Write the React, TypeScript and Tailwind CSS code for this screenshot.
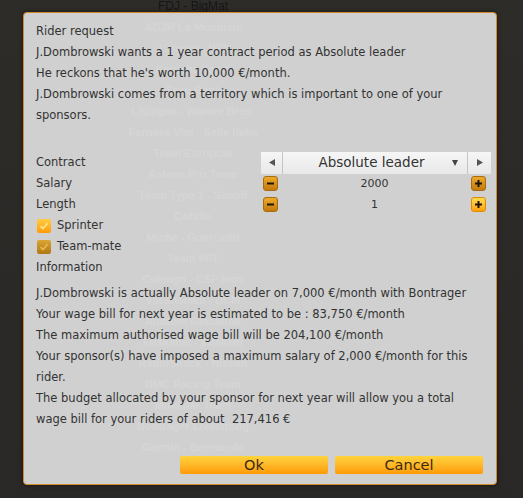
import React from 'react';

const teams = [
  'FDJ - BigMat',
  'AG2R La Mondiale',
  'Lampre - ISD',
  'Katusha Team',
  'Saxo Bank',
  'Liquigas - Warner Bros.',
  'Farnese Vini - Selle Italia',
  'Team Europcar',
  'Astana Pro Team',
  'Team Type 1 - Sanofi',
  'Cofidis',
  'Miche - Guerciotti',
  'Team WIT',
  'Colnago - CSF Inox',
  'Vacansoleil - DCM',
  'Androni Giocattoli',
  'Euskaltel - Euskadi',
  'RadioShack - Nissan',
  'BMC Racing Team',
  'Movistar Team',
  'Bontrager Livestrong',
  'Garmin - Barracuda',
];

const StepButton = ({ sign, bright }: { sign: '-' | '+'; bright?: boolean }) => (
  <div
    className={`w-[15px] h-[15px] rounded-[3px] flex items-center justify-center border ${
      bright
        ? 'bg-gradient-to-b from-[#ffdc50] to-[#ffa000] border-[#e08a00]'
        : 'bg-gradient-to-b from-[#eeaa2c] to-[#c27a0c] border-[#a86c0c]'
    }`}
  >
    <svg width="9" height="9" viewBox="0 0 9 9">
      <rect x="1" y="3.5" width="7" height="2" fill="#1e1606" />
      {sign === '+' && <rect x="3.5" y="1" width="2" height="7" fill="#1e1606" />}
    </svg>
  </div>
);

const CheckBox = ({ dim }: { dim?: boolean }) => (
  <div
    className={`w-[14px] h-[14px] rounded-[2px] flex items-center justify-center ${
      dim
        ? 'bg-gradient-to-b from-[#dca636] to-[#b07712]'
        : 'bg-gradient-to-b from-[#ffcc40] to-[#ff9c00]'
    }`}
  >
    <svg width="10" height="10" viewBox="0 0 10 10">
      <path
        d="M1.5 5.2 L4 7.6 L8.6 2.2"
        fill="none"
        stroke={dim ? '#e8bb52' : '#ffe38a'}
        strokeWidth="1.6"
      />
    </svg>
  </div>
);

export default function App() {
  return (
    <div className="relative w-[523px] h-[498px] overflow-hidden bg-gradient-to-b from-[#2d2c29] to-[#2a2826] font-['DejaVu_Sans',sans-serif]">
      {/* team list behind the dialog */}
      <div className="ml-[63px] w-[260px] -mt-[4px] flex flex-col text-center leading-[21px] text-[12px] font-['Liberation_Sans',sans-serif]">
        {teams.map((t, i) => (
          <div key={t} className={i === 0 ? 'text-[#161616]' : 'text-white font-bold text-[11px]'}>
            {t}
          </div>
        ))}
      </div>

      {/* dialog */}
      <div className="absolute left-[23px] top-[12px] w-[474px] h-[473px] rounded-[4px] border border-[#d48a2a] bg-[rgba(212,212,212,0.975)] shadow-[0_0_4px_rgba(0,0,0,0.5)] flex flex-col text-[#333] text-[11.5px] leading-[21px]">
        <div className="pl-[12px] pt-[8px] w-[457px]">
          <p>Rider request</p>
          <p>J.Dombrowski wants a 1 year contract period as Absolute leader</p>
          <p>He reckons that he's worth 10,000 €/month.</p>
          <p>J.Dombrowski comes from a territory which is important to one of your sponsors.</p>
        </div>

        <div className="mt-[26px] pl-[12px] grid grid-cols-[225px_230px]">
          <div className="h-[21px] flex items-center">Contract</div>
          <div className="h-[21px] flex items-center">
            <div className="w-[230px] h-[22px] flex bg-gradient-to-b from-[#f6f6f6] to-[#e8e8e8]">
              <div className="w-[22px] flex items-center justify-center border-r border-[#c4c4c4]">
                <svg width="6" height="7" viewBox="0 0 6 7">
                  <path d="M0 3.5 L6 0 L6 7 Z" fill="#555" />
                </svg>
              </div>
              <div className="flex-1 flex items-center">
                <span className="flex-1 text-center text-[13.5px] pl-[8px]">Absolute leader</span>
                <svg width="6" height="6" viewBox="0 0 6 6" className="mr-[9px]">
                  <path d="M0 0 L6 0 L3 6 Z" fill="#444" />
                </svg>
              </div>
              <div className="w-[24px] flex items-center justify-center border-l border-[#c4c4c4]">
                <svg width="6" height="7" viewBox="0 0 6 7">
                  <path d="M6 3.5 L0 0 L0 7 Z" fill="#555" />
                </svg>
              </div>
            </div>
          </div>

          <div className="h-[21px] flex items-center">Salary</div>
          <div className="h-[21px] flex items-center justify-between pl-[2px] pr-[5px]">
            <StepButton sign="-" />
            <span className="text-[11px]">2000</span>
            <StepButton sign="+" />
          </div>

          <div className="h-[21px] flex items-center">Length</div>
          <div className="h-[21px] flex items-center justify-between pl-[2px] pr-[5px]">
            <StepButton sign="-" />
            <span className="text-[11px]">1</span>
            <StepButton sign="+" bright />
          </div>

          <div className="h-[21px] flex items-center gap-[6px] pl-[1px]">
            <CheckBox />
            <span>Sprinter</span>
          </div>
          <div />

          <div className="h-[21px] flex items-center gap-[6px] pl-[1px]">
            <CheckBox dim />
            <span>Team-mate</span>
          </div>
          <div />

          <div className="h-[21px] flex items-center">Information</div>
          <div />
        </div>

        <div className="mt-[5px] pl-[12px] w-[457px]">
          <p>J.Dombrowski is actually Absolute leader on 7,000 €/month with Bontrager</p>
          <p>Your wage bill for next year is estimated to be : 83,750 €/month</p>
          <p>The maximum authorised wage bill will be 204,100 €/month</p>
          <p>Your sponsor(s) have imposed a maximum salary of 2,000 €/month for this rider.</p>
          <p>The budget allocated by your sponsor for next year will allow you a total wage bill for your riders of about&nbsp; 217,416 €</p>
        </div>

        <div className="mt-auto flex justify-end gap-[7px] pr-[13px] pb-[10px]">
          <button className="w-[148px] h-[18px] rounded-[2px] bg-gradient-to-b from-[#ffd43e] to-[#ff9a00] text-[14.5px] leading-[18px] text-[#3a2a10]">
            Ok
          </button>
          <button className="w-[148px] h-[18px] rounded-[2px] bg-gradient-to-b from-[#ffd43e] to-[#ff9a00] text-[14.5px] leading-[18px] text-[#3a2a10]">
            Cancel
          </button>
        </div>
      </div>
    </div>
  );
}
